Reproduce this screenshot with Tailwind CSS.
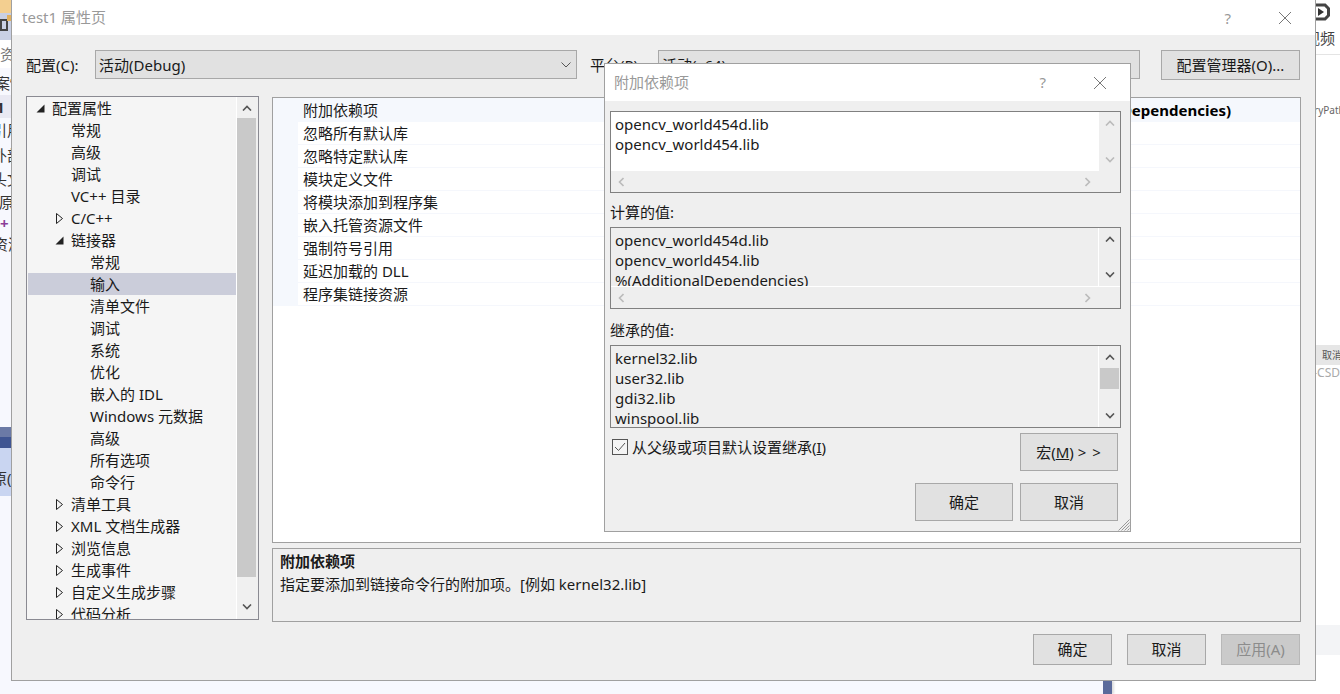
<!DOCTYPE html>
<html lang="zh-CN">
  <head>
    <meta charset="UTF-8" />
    <title>test1 属性页</title>
    <script src="https://cdn.jsdelivr.net/npm/@tailwindcss/browser@4"></script>
  </head>
  <body class="relative w-[1340px] h-[694px] overflow-hidden bg-white text-[15px] leading-[20px] text-[#1a1a1a] font-['Noto_Sans','Noto_Sans_CJK_SC',sans-serif]">
    <!-- desktop behind the dialogs: left strip -->
    <div class="absolute left-0 top-0 w-[12px] h-[694px] overflow-hidden flex flex-col bg-[#f7f8fe] text-[#333] whitespace-nowrap">
      <div class="h-[13px] bg-[#f3cf90]"></div>
      <div class="h-[27px] bg-[#c9d0e4] relative">
        <div class="absolute left-0 top-[6px] w-[8px] h-[12px] border-2 border-[#444]"></div>
        <div class="absolute left-[7px] top-[2px] w-[5px] h-[6px] bg-[#e0b060]"></div>
      </div>
      <div class="h-[28px] flex items-center bg-white"><span class="text-[#777]">资</span></div>
      <div class="h-[27px] flex items-center pt-[3px]"><span class="-ml-[5px]">案”</span></div>
      <div class="h-[23px] flex items-center bg-[#e9e9f3] font-bold"><span class="-ml-[4px]">1</span></div>
      <div class="h-[24px] flex items-center"><span class="-ml-[8px]">引用</span></div>
      <div class="h-[25px] flex items-center"><span class="-ml-[8px]">外部</span></div>
      <div class="h-[23px] flex items-center"><span class="-ml-[8px]">头文</span></div>
      <div class="h-[23px] flex items-center"><span class="-ml-[1px]">原文</span></div>
      <div class="h-[20px] flex items-center text-[#8a3d98] font-bold"><span>+</span></div>
      <div class="h-[22px] flex items-center"><span class="-ml-[7px]">资源</span></div>
      <div class="h-[172px]"></div>
      <div class="h-[10px] bg-[#6b7aa6]"></div>
      <div class="h-[11px] bg-[#3f5592]"></div>
      <div class="h-[48px] flex items-start pt-[20px] bg-[#c9d5f1]"><span class="-ml-[8px]">原(S</span></div>
    </div>

    <!-- desktop behind the dialogs: right strip -->
    <div class="absolute left-[1316px] top-0 w-[24px] h-[694px] overflow-hidden whitespace-nowrap flex flex-col">
      <div class="h-[28px] pt-[3px]">
        <svg width="14" height="18" viewBox="0 0 14 18"><path d="M0 2h9l3.500 3.500v7L9 16H0" fill="none" stroke="#444" stroke-width="3" /><path d="M2 5l6 4-6 4z" fill="#333" /></svg>
      </div>
      <div class="h-[27px] flex items-center pb-[6px] border-b border-[#e4e4e4] text-[#444]"><span class="-ml-[11px]">视频</span></div>
      <div class="h-[45px]"></div>
      <div class="h-[20px] flex items-center text-[10px] text-[#666]"><span class="-ml-[2px]">ryPath</span></div>
      <div class="h-[225px]"></div>
      <div class="h-[20px] flex items-center pl-[6px] bg-[#e6e6e6] text-[10px] text-[#555]"><span>取消</span></div>
      <div class="h-[16px] flex items-center text-[12px] text-[#aaa]"><span class="border-t border-[#ccc] w-[4px]"></span><span>CSD</span></div>
      <div class="h-[244px]"></div>
      <div class="h-[30px] bg-[#f3f4f6]"></div>
    </div>
    <div class="absolute left-0 top-[681px] w-[1103px] h-[13px] bg-[#f7f8fe]"></div>
    <div class="absolute left-[1103px] top-[681px] w-[9px] h-[13px] bg-[#5b6a9b] shadow-[2px_0_2px_#ddd]"></div>

    <!-- property pages window -->
    <div class="absolute left-[11px] top-0 w-[1305px] h-[681px] border-x border-b border-[#a0a0a0] bg-[#efefef] flex flex-col">
      <div class="h-[35px] shrink-0 bg-white flex items-center pl-[10px] text-[#999]">
        <span class="flex-1 pb-[2px]">test1 属性页</span>
        <span class="mr-[47px] text-[#999]">?</span>
        <svg class="mr-[23px]" width="14" height="14" viewBox="0 0 14 14"><path d="M1 1l12 12M13 1L1 13" stroke="#777" fill="none" /></svg>
      </div>

      <div class="flex items-center h-[29px] mt-[15px] pl-[14px]">
        <span class="w-[69px]">配置(C):</span>
        <div class="w-[482px] h-[29px] border border-[#a8a8a8] bg-[#e1e1e1] flex items-center pl-[3px] pr-[5px] justify-between">
          <span>活动(Debug)</span>
          <svg width="10" height="6" viewBox="0 0 10 6"><path d="M0.5 0.5L5 5l4.500-4.500" stroke="#555" fill="none" /></svg>
        </div>
        <span class="w-[68px] ml-[13px]">平台(P):</span>
        <div class="w-[482px] h-[29px] border border-[#a8a8a8] bg-[#e1e1e1] flex items-center pl-[3px]">活动(x64)</div>
        <div class="w-[139px] h-[30px] ml-[21px] border border-[#a8a8a8] bg-[#e1e1e1] flex items-center justify-center">配置管理器(O)...</div>
      </div>

      <div class="flex mt-[17px] pl-[14px]">
        <!-- tree -->
        <div class="w-[233px] h-[524px] border border-[#8a8a92] bg-[#f5f5f5] flex overflow-hidden">
          <div class="w-[209px] h-[522px] overflow-hidden">
            <div class="h-[22px] flex items-center pl-[9px]"><svg class="mr-[7px]" width="9" height="9" viewBox="0 0 9 9"><path d="M8.500 0.500V8.500H0.500z" fill="#222" /></svg>配置属性</div>
            <div class="h-[22px] flex items-center pl-[44px]">常规</div>
            <div class="h-[22px] flex items-center pl-[44px]">高级</div>
            <div class="h-[22px] flex items-center pl-[44px]">调试</div>
            <div class="h-[22px] flex items-center pl-[44px]">VC++ 目录</div>
            <div class="h-[22px] flex items-center pl-[29px]"><svg class="mr-[8px]" width="7" height="11" viewBox="0 0 7 11"><path d="M0.500 0.500L6.500 5.500 0.500 10.500z" fill="none" stroke="#222" /></svg>C/C++</div>
            <div class="h-[22px] flex items-center pl-[28px]"><svg class="mr-[7px]" width="9" height="9" viewBox="0 0 9 9"><path d="M8.500 0.500V8.500H0.500z" fill="#222" /></svg>链接器</div>
            <div class="h-[22px] flex items-center pl-[63px]">常规</div>
            <div class="h-[22px] flex items-center pl-[63px] ml-px bg-[#cbcdda]"><span class="-ml-px">输入</span></div>
            <div class="h-[22px] flex items-center pl-[63px]">清单文件</div>
            <div class="h-[22px] flex items-center pl-[63px]">调试</div>
            <div class="h-[22px] flex items-center pl-[63px]">系统</div>
            <div class="h-[22px] flex items-center pl-[63px]">优化</div>
            <div class="h-[22px] flex items-center pl-[63px]">嵌入的 IDL</div>
            <div class="h-[22px] flex items-center pl-[63px]">Windows 元数据</div>
            <div class="h-[22px] flex items-center pl-[63px]">高级</div>
            <div class="h-[22px] flex items-center pl-[63px]">所有选项</div>
            <div class="h-[22px] flex items-center pl-[63px]">命令行</div>
            <div class="h-[22px] flex items-center pl-[29px]"><svg class="mr-[8px]" width="7" height="11" viewBox="0 0 7 11"><path d="M0.500 0.500L6.500 5.500 0.500 10.500z" fill="none" stroke="#222" /></svg>清单工具</div>
            <div class="h-[22px] flex items-center pl-[29px]"><svg class="mr-[8px]" width="7" height="11" viewBox="0 0 7 11"><path d="M0.500 0.500L6.500 5.500 0.500 10.500z" fill="none" stroke="#222" /></svg>XML 文档生成器</div>
            <div class="h-[22px] flex items-center pl-[29px]"><svg class="mr-[8px]" width="7" height="11" viewBox="0 0 7 11"><path d="M0.500 0.500L6.500 5.500 0.500 10.500z" fill="none" stroke="#222" /></svg>浏览信息</div>
            <div class="h-[22px] flex items-center pl-[29px]"><svg class="mr-[8px]" width="7" height="11" viewBox="0 0 7 11"><path d="M0.500 0.500L6.500 5.500 0.500 10.500z" fill="none" stroke="#222" /></svg>生成事件</div>
            <div class="h-[22px] flex items-center pl-[29px]"><svg class="mr-[8px]" width="7" height="11" viewBox="0 0 7 11"><path d="M0.500 0.500L6.500 5.500 0.500 10.500z" fill="none" stroke="#222" /></svg>自定义生成步骤</div>
            <div class="h-[22px] flex items-center pl-[29px]"><svg class="mr-[8px]" width="7" height="11" viewBox="0 0 7 11"><path d="M0.500 0.500L6.500 5.500 0.500 10.500z" fill="none" stroke="#222" /></svg>代码分析</div>
          </div>
          <div class="w-[22px] h-[522px] bg-[#f0f0f0] border-l border-white flex flex-col items-center pr-[2px]">
            <div class="h-[21px] flex items-center justify-center"><svg width="10" height="6" viewBox="0 0 10 6"><path d="M1 5.500L5 1.500l4 4" stroke="#555" stroke-width="1.600" fill="none" /></svg></div>
            <div class="w-[19px] h-[459px] bg-[#c9c9c9]"></div>
            <div class="flex-1 w-full flex items-end justify-center pb-[9px]"><svg width="10" height="6" viewBox="0 0 10 6"><path d="M1 0.500L5 4.500l4-4" stroke="#555" stroke-width="1.600" fill="none" /></svg></div>
          </div>
        </div>

        <!-- options + description -->
        <div class="ml-[13px] mt-px w-[1029px] flex flex-col gap-[5px]">
          <div class="h-[446px] border border-[#a0a0a0] bg-white flex flex-col">
            <div class="h-[24px] pb-px bg-[#f5f8fd] flex items-center pl-[30px] justify-between pr-[69px]"><span>附加依赖项</span><span class="font-bold text-black">%(AdditionalDependencies)</span></div>
            <div class="flex flex-col pl-[25px] bg-[#f5f8fd]">
              <div class="h-[23px] flex items-center pl-[5px] bg-white border-b border-[#f5f7fc]">忽略所有默认库</div>
              <div class="h-[23px] flex items-center pl-[5px] bg-white border-b border-[#f5f7fc]">忽略特定默认库</div>
              <div class="h-[23px] flex items-center pl-[5px] bg-white border-b border-[#f5f7fc]">模块定义文件</div>
              <div class="h-[23px] flex items-center pl-[5px] bg-white border-b border-[#f5f7fc]">将模块添加到程序集</div>
              <div class="h-[23px] flex items-center pl-[5px] bg-white border-b border-[#f5f7fc]">嵌入托管资源文件</div>
              <div class="h-[23px] flex items-center pl-[5px] bg-white border-b border-[#f5f7fc]">强制符号引用</div>
              <div class="h-[23px] flex items-center pl-[5px] bg-white border-b border-[#f5f7fc]">延迟加载的 DLL</div>
              <div class="h-[23px] flex items-center pl-[5px] bg-white border-b border-[#f5f7fc]">程序集链接资源</div>
            </div>
          </div>
          <div class="h-[74px] border border-[#a0a0a0] pl-[7px] pt-[2px]">
            <div class="font-bold h-[23px]">附加依赖项</div>
            <div class="h-[22px]">指定要添加到链接命令行的附加项。[例如 kernel32.lib]</div>
          </div>
        </div>
      </div>

      <div class="flex justify-end gap-[15px] mt-[12px] pr-[15px]">
        <div class="w-[79px] h-[31px] pb-px border border-[#a8a8a8] bg-[#e1e1e1] flex items-center justify-center">确定</div>
        <div class="w-[79px] h-[31px] pb-px border border-[#a8a8a8] bg-[#e1e1e1] flex items-center justify-center">取消</div>
        <div class="w-[79px] h-[31px] pb-px border border-[#b8b8b8] bg-[#cacaca] flex items-center justify-center text-[#8c8c8c]">应用(A)</div>
      </div>
    </div>

    <!-- additional dependencies dialog -->
    <div class="absolute left-[604px] top-[63px] w-[527px] h-[469px] border border-[#a0a0a0] bg-[#efefef] flex flex-col">
      <div class="h-[37px] shrink-0 bg-white flex items-center pl-[9px] text-[#999]">
        <span class="flex-1 pb-[2px]">附加依赖项</span>
        <span class="mr-[47px] pb-[2px]">?</span>
        <svg class="mr-[23px]" width="14" height="14" viewBox="0 0 14 14"><path d="M1 1l12 12M13 1L1 13" stroke="#777" fill="none" /></svg>
      </div>
      <div class="flex flex-col pl-[5px] pr-[9px] pt-[10px]">
        <!-- editable box -->
        <div class="h-[82px] border border-[#808080] flex flex-col">
          <div class="h-[59px] flex">
            <div class="flex-1 bg-white pl-[4px] pt-[2px]">
              <div>opencv_world454d.lib</div>
              <div>opencv_world454.lib</div>
            </div>
            <div class="w-[21px] flex flex-col items-center justify-between pt-[8px] pb-[8px]">
              <svg width="10" height="6" viewBox="0 0 10 6"><path d="M1 5.500L5 1.500l4 4" stroke="#bbb" stroke-width="1.600" fill="none" /></svg>
              <svg width="10" height="6" viewBox="0 0 10 6"><path d="M1 0.500L5 4.500l4-4" stroke="#bbb" stroke-width="1.600" fill="none" /></svg>
            </div>
          </div>
          <div class="flex-1 flex items-center justify-between pl-[7px] pr-[29px]">
            <svg width="6" height="10" viewBox="0 0 6 10"><path d="M5.500 1L1.500 5l4 4" stroke="#bbb" stroke-width="1.600" fill="none" /></svg>
            <svg width="6" height="10" viewBox="0 0 6 10"><path d="M0.500 1L4.500 5l-4 4" stroke="#bbb" stroke-width="1.600" fill="none" /></svg>
          </div>
        </div>
        <div class="h-[34px] flex items-end pb-[5px]">计算的值:</div>
        <!-- computed box -->
        <div class="h-[82px] border border-[#808080] flex flex-col bg-[#eeeeee]">
          <div class="h-[59px] flex border-b border-white">
            <div class="flex-1 pl-[4px] pt-[2px] overflow-hidden border-r border-white">
              <div>opencv_world454d.lib</div>
              <div>opencv_world454.lib</div>
              <div>%(AdditionalDependencies)</div>
            </div>
            <div class="w-[21px] flex flex-col items-center justify-between pt-[8px] pb-[8px]">
              <svg width="10" height="6" viewBox="0 0 10 6"><path d="M1 5.500L5 1.500l4 4" stroke="#555" stroke-width="1.600" fill="none" /></svg>
              <svg width="10" height="6" viewBox="0 0 10 6"><path d="M1 0.500L5 4.500l4-4" stroke="#555" stroke-width="1.600" fill="none" /></svg>
            </div>
          </div>
          <div class="flex-1 flex items-center justify-between pl-[7px] pr-[29px]">
            <svg width="6" height="10" viewBox="0 0 6 10"><path d="M5.500 1L1.500 5l4 4" stroke="#bbb" stroke-width="1.600" fill="none" /></svg>
            <svg width="6" height="10" viewBox="0 0 6 10"><path d="M0.500 1L4.500 5l-4 4" stroke="#bbb" stroke-width="1.600" fill="none" /></svg>
          </div>
        </div>
        <div class="h-[36px] flex items-end pb-[5px]">继承的值:</div>
        <!-- inherited box -->
        <div class="h-[83px] border border-[#808080] flex bg-[#efefef]">
          <div class="flex-1 pl-[4px] pt-[2px] overflow-hidden border-r border-white">
            <div>kernel32.lib</div>
            <div>user32.lib</div>
            <div>gdi32.lib</div>
            <div>winspool.lib</div>
          </div>
          <div class="w-[21px] flex flex-col items-center pt-[8px] pb-[8px]">
            <svg width="10" height="6" viewBox="0 0 10 6"><path d="M1 5.500L5 1.500l4 4" stroke="#555" stroke-width="1.600" fill="none" /></svg>
            <div class="w-[19px] h-[21px] mt-[8px] bg-[#c9c9c9]"></div>
            <div class="flex-1"></div>
            <svg width="10" height="6" viewBox="0 0 10 6"><path d="M1 0.500L5 4.500l4-4" stroke="#555" stroke-width="1.600" fill="none" /></svg>
          </div>
        </div>
        <div class="flex justify-between mt-[5px] pr-[3px]">
          <div class="flex items-start pt-[6px] pl-[2px]">
            <div class="w-[16px] h-[16px] border border-[#555] bg-[#f4f4f4] flex items-center justify-center">
              <svg width="12" height="10" viewBox="0 0 12 10"><path d="M1 5l3.500 3.500L11 1" stroke="#555" fill="none" /></svg>
            </div>
            <span class="ml-[4px] -mt-[2px]">从父级或项目默认设置继承(<span class="underline">I</span>)</span>
          </div>
          <div class="w-[98px] h-[38px] pb-px border border-[#a8a8a8] bg-[#e1e1e1] flex items-center justify-center">宏(<span class="underline">M</span>) <span class="ml-[4px] tracking-[1px]">&gt; &gt;</span></div>
        </div>
        <div class="flex justify-end gap-[7px] mt-[12px] pr-[3px]">
          <div class="w-[98px] h-[38px] border border-[#a8a8a8] bg-[#e1e1e1] flex items-center justify-center">确定</div>
          <div class="w-[98px] h-[38px] border border-[#a8a8a8] bg-[#e1e1e1] flex items-center justify-center">取消</div>
        </div>
      </div>
      <svg class="absolute right-0 bottom-0" width="12" height="12" viewBox="0 0 12 12"><path d="M11.500 0.500L0.500 11.500M11.500 3.500L3.500 11.500M11.500 6.500L6.500 11.500M11.500 9.500L9.500 11.500" stroke="#999" fill="none" /></svg>
    </div>
  </body>
</html>
